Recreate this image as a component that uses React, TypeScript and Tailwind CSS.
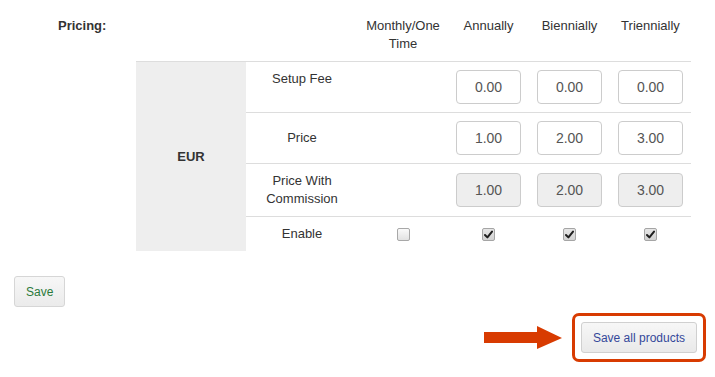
import React from 'react';

const cycles = ["Annually", "Biennially", "Triennially"];

const PriceInput = ({ value, disabled }: { value: string; disabled?: boolean }) => (
  <input
    readOnly
    value={value}
    disabled={disabled}
    className={`w-[65px] h-[34px] rounded-[4px] border border-[#cccccc] text-center text-[14px] text-[#555555] outline-none ${
      disabled ? "bg-[#eeeeee]" : "bg-white"
    }`}
  />
);

const Check = ({ checked }: { checked?: boolean }) => (
  <span
    className={`inline-flex items-center justify-center w-[13px] h-[13px] rounded-[2px] border align-middle ${
      checked ? "border-[#a5a5a5] bg-gradient-to-b from-[#e6e6e6] to-[#d2d2d2]" : "border-[#a8a8a8] bg-gradient-to-b from-[#fafafa] to-[#e2e2e2]"
    }`}
  >
    {checked && (
      <svg width="9" height="9" viewBox="0 0 9 9">
        <path d="M1 5 L3.4 7.4 L8 1.6" fill="none" stroke="#1f1f1f" strokeWidth="2" strokeLinecap="round" strokeLinejoin="round" />
      </svg>
    )}
  </span>
);

const App = () => {
  return (
    <div className="min-h-screen w-[715px] bg-white pt-[9px] text-[13px] leading-[18px] text-[#333333] font-['Liberation_Sans',Arial,sans-serif]">
      {/* Pricing block */}
      <div className="flex">
        <div className="w-[136px] pl-[58px] pt-[8px] font-bold">Pricing:</div>
        <table className="w-[555px] table-fixed border-collapse">
          <colgroup>
            <col className="w-[110px]" />
            <col className="w-[112px]" />
            <col className="w-[90px]" />
            <col className="w-[81px]" />
            <col className="w-[81px]" />
            <col className="w-[81px]" />
          </colgroup>
          <thead>
            <tr>
              <th className="p-2" />
              <th className="p-2" />
              <th className="p-2 align-top text-center font-normal">Monthly/One Time</th>
              {cycles.map((c) => (
                <th key={c} className="p-2 align-top text-center font-normal">{c}</th>
              ))}
            </tr>
          </thead>
          <tbody>
            <tr>
              <td rowSpan={4} className="border-t border-[#dddddd] bg-[#eeeeee] text-center align-middle font-bold">EUR</td>
              <td className="border-t border-[#dddddd] p-2 text-center align-top">Setup Fee</td>
              <td className="border-t border-[#dddddd] p-2" />
              {["0.00", "0.00", "0.00"].map((v, i) => (
                <td key={i} className="border-t border-[#dddddd] p-2 text-center align-middle">
                  <PriceInput value={v} />
                </td>
              ))}
            </tr>
            <tr>
              <td className="border-t border-[#dddddd] p-2 text-center align-middle">Price</td>
              <td className="border-t border-[#dddddd] p-2" />
              {["1.00", "2.00", "3.00"].map((v, i) => (
                <td key={i} className="border-t border-[#dddddd] p-2 text-center align-middle">
                  <PriceInput value={v} />
                </td>
              ))}
            </tr>
            <tr>
              <td className="border-t border-[#dddddd] p-2 text-center align-middle">Price With Commission</td>
              <td className="border-t border-[#dddddd] p-2" />
              {["1.00", "2.00", "3.00"].map((v, i) => (
                <td key={i} className="border-t border-[#dddddd] p-2 text-center align-middle">
                  <PriceInput value={v} disabled />
                </td>
              ))}
            </tr>
            <tr>
              <td className="border-t border-[#dddddd] p-2 text-center align-middle">Enable</td>
              <td className="border-t border-[#dddddd] p-2 text-center align-middle">
                <Check />
              </td>
              {cycles.map((c) => (
                <td key={c} className="border-t border-[#dddddd] p-2 text-center align-middle">
                  <Check checked />
                </td>
              ))}
            </tr>
          </tbody>
        </table>
      </div>

      {/* Save */}
      <div className="mt-[25px] pl-[14px]">
        <button className="h-[31px] px-[11px] rounded-[3px] border border-[#d6d6d6] bg-gradient-to-b from-[#f7f7f7] to-[#ebebeb] text-[12px] text-[#2b7a3b]">
          Save
        </button>
      </div>

      {/* Save all products callout */}
      <div className="mt-[6px] flex items-center justify-end pr-[9px]">
        <svg width="78" height="23" viewBox="0 0 78 23" className="mr-[10px]">
          <path d="M0 6 H53 V0 L78 12 L53 23 V17 H0 Z" fill="#d83b01" />
        </svg>
        <div className="rounded-[7px] border-[3px] border-[#d83b01] px-[6px] py-[6px]">
          <button className="h-[31px] px-[11px] rounded-[3px] border border-[#d0d0d0] bg-gradient-to-b from-[#f7f7f7] to-[#e9e9e9] text-[12px] text-[#34489a]">
            Save all products
          </button>
        </div>
      </div>
    </div>
  );
};

export default App;
